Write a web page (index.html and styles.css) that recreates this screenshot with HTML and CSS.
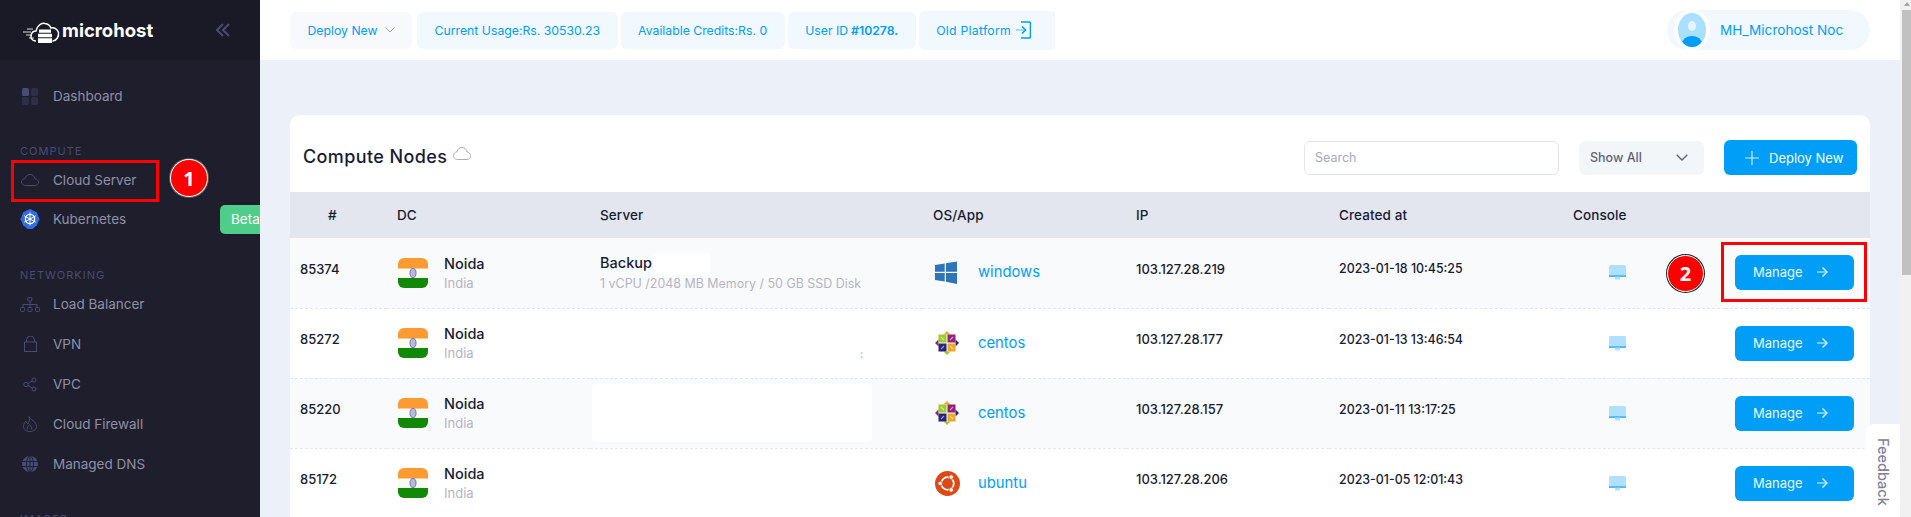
FILE: index.html
```html
<!DOCTYPE html>
<html lang="en">
<head>
<meta charset="utf-8">
<title>Compute Nodes</title>
<link rel="stylesheet" href="styles.css">
</head>
<body>
<svg class="defs" width="0" height="0" aria-hidden="true">
  <symbol id="flag" viewBox="0 0 30 30">
    <rect width="30" height="30" rx="6" fill="#f8fbf2"/>
    <path d="M0 10.500V6a6 6 0 0 1 6-6h18a6 6 0 0 1 6 6v4.500z" fill="#fe9a32"/>
    <path d="M0 20h30v4a6 6 0 0 1-6 6H6a6 6 0 0 1-6-6z" fill="#128807"/>
    <ellipse cx="15" cy="15" rx="3" ry="4.500" fill="#b9b9dc" stroke="#6d6db0" stroke-width=".9"/>
  </symbol>
  <symbol id="centos" viewBox="0 0 24 24">
    <path d="M12 0l3.500 3.500h-7z" fill="#efa724"/>
    <path d="M24 12l-3.500 3.500v-7z" fill="#262577"/>
    <path d="M12 24l-3.500-3.500h7z" fill="#9ccd2a"/>
    <path d="M0 12l3.500-3.500v7z" fill="#932279"/>
    <rect x="3.500" y="3.500" width="8" height="8" fill="#9ccd2a"/>
    <rect x="12.500" y="3.500" width="8" height="8" fill="#932279"/>
    <rect x="12.500" y="12.500" width="8" height="8" fill="#efa724"/>
    <rect x="3.500" y="12.500" width="8" height="8" fill="#262577"/>
    <path d="M6 6l3 3M18 6l-3 3M18 18l-3-3M6 18l3-3" stroke="#fff" stroke-opacity=".55" stroke-width="1.200"/>
  </symbol>
  <symbol id="ubuntu" viewBox="0 0 25 25">
    <circle cx="12.500" cy="12.500" r="12.500" fill="#dd4814"/>
    <circle cx="12.500" cy="12.500" r="6.300" fill="none" stroke="#fff" stroke-width="1.800"/>
    <g fill="#fff" stroke="#dd4814" stroke-width=".9">
      <circle cx="5.200" cy="12.500" r="2.300"/>
      <circle cx="16.200" cy="6.100" r="2.300"/>
      <circle cx="16.200" cy="18.900" r="2.300"/>
    </g>
  </symbol>
  <symbol id="windows" viewBox="0 0 22 23">
    <path d="M0 4l9.700-1.600v8.300H0zM10.900 2.200L22 .5v10.200H10.900zM0 12h9.700v8.500L0 19zM10.900 12H22v11l-11.100-2.300z" fill="#2f74b9"/>
  </symbol>
  <symbol id="monitor" viewBox="0 0 17 15">
    <path d="M0 1.500A1.500 1.500 0 0 1 1.500 0h14A1.500 1.500 0 0 1 17 1.500V11H0z" fill="#afe0ff"/>
    <rect y="10.500" width="17" height="1.200" fill="#009ef7"/>
    <rect x="6" y="11.700" width="5" height="2.800" fill="#afe0ff"/>
  </symbol>
  <symbol id="arrow" viewBox="0 0 12 12">
    <path d="M1 6h9.500" stroke="#9bd8fd" stroke-width="1.500" fill="none"/>
    <path d="M6.500 1.500L11 6l-4.500 4.500" stroke="#d4eeff" stroke-width="1.500" fill="none"/>
  </symbol>
</svg>

<div class="app">
  <aside class="sidebar">
    <div class="brand">
      <svg class="logo-mark" width="40" height="28" viewBox="0 0 40 28" aria-hidden="true">
        <path d="M1 15h8M4 18h6M7 21h5M5 12h6" stroke="#d8d8d8" stroke-width="1" fill="none"/>
        <path d="M14 24c-3.500 0-5.500-2.500-5-5.500.5-3 3-4.500 5-4.500 1-5 5-8.500 9-7.500 3 .3 5 2 6 4.500 3-1 6.500 1 7.500 4.500.6 4-2 8.500-6 8.500" stroke="#fff" stroke-width="1.500" fill="none"/>
        <path d="M17 12.500h12v3.300H17zM16 16.800h14v3.400H16zM16 21.200h14v4.800H16z" fill="#fff"/>
      </svg>
      <span class="logo-text">microhost</span>
      <svg class="collapse" width="14" height="14" viewBox="0 0 14 14" aria-hidden="true"><path d="M7 1L1 7l6 6M13 1L7 7l6 6" fill="none" stroke="#494b74" stroke-width="2"/></svg>
    </div>
    <nav class="nav">
      <a class="nav-item">
        <span class="nav-icon"><svg width="16" height="17" viewBox="0 0 16 17"><rect width="7" height="8" rx="1.500" fill="#494b74"/><rect x="9" width="7" height="8" rx="1.500" fill="#2d2e47"/><rect y="9" width="7" height="8" rx="1.500" fill="#2d2e47"/><rect x="9" y="9" width="7" height="8" rx="1.500" fill="#2d2e47"/></svg></span>
        Dashboard
      </a>
      <div class="nav-label">COMPUTE</div>
      <a class="nav-item">
        <span class="nav-icon"><svg width="18" height="12" viewBox="0 0 18 12"><path d="M4.500 11.500C2 11.500.5 10 .5 8c0-2 1.500-3.300 3.300-3.300C4.500 2.300 6.500.5 9 .5c2.800 0 4.700 2 5 4.300 1.800.2 3.500 1.400 3.500 3.300 0 2-1.500 3.400-3.700 3.400z" fill="none" stroke="#494b74"/></svg></span>
        Cloud Server
      </a>
      <a class="nav-item nav-item-tight">
        <span class="nav-icon"><svg width="20" height="20" viewBox="0 0 20 20"><path d="M10 0l6.800 3.200 2.700 7-2.700 6L12.500 20h-5l-4.300-3.800-2.700-6 2.700-7z" fill="#326ce5"/><circle cx="10" cy="10" r="4.600" fill="none" stroke="#fff" stroke-width="1.300"/><path d="M10 3.500v13M4.300 6.800l11.400 6.400M15.700 6.800L4.300 13.200" stroke="#fff" stroke-width="1"/></svg></span>
        Kubernetes
        <span class="beta">Beta</span>
      </a>
      <div class="nav-label">NETWORKING</div>
      <a class="nav-item">
        <span class="nav-icon"><svg width="20" height="15" viewBox="0 0 20 15" fill="none" stroke="#494b74"><rect x="7.800" y=".5" width="4" height="3.500" rx="1"/><path d="M10 4v3.500M3 10V7.500h14V10M10 7.500V10"/><rect x=".5" y="10.500" width="4" height="4" rx="1"/><rect x="8" y="10.500" width="4" height="4" rx="1"/><rect x="15.500" y="10.500" width="4" height="4" rx="1"/></svg></span>
        Load Balancer
      </a>
      <a class="nav-item">
        <span class="nav-icon"><svg width="13" height="16" viewBox="0 0 13 16" fill="none" stroke="#494b74"><rect x=".5" y="6" width="12" height="9.500"/><path d="M2.500 6V4a4 4 0 0 1 8 0v2"/></svg></span>
        VPN
      </a>
      <a class="nav-item">
        <span class="nav-icon"><svg width="14" height="15" viewBox="0 0 14 15" fill="none" stroke="#494b74"><circle cx="11" cy="3" r="2"/><circle cx="3" cy="7.500" r="2.200"/><circle cx="11" cy="12" r="2"/><path d="M5 6.500l4.300-2.500M5 8.500l4.300 2.500"/></svg></span>
        VPC
      </a>
      <a class="nav-item">
        <span class="nav-icon"><svg width="14" height="16" viewBox="0 0 14 16" fill="none" stroke="#494b74"><path d="M6 .5c1 3 7.500 5 7.500 10 0 3-3 5-6.500 5s-6.500-2-6.500-5C.5 8 2 6 3 5c0 1.500 1 2.500 2 3 1-2 2-4 1-7.500z"/><path d="M4.500 13.500c-1-2 1-3 2-5 1 1 3 3 2 5"/></svg></span>
        Cloud Firewall
      </a>
      <a class="nav-item">
        <span class="nav-icon"><svg width="16" height="16" viewBox="0 0 16 16"><circle cx="8" cy="8" r="8" fill="#494b74"/><g fill="none" stroke="#1e1e2d" stroke-width=".9"><ellipse cx="8" cy="8" rx="3.500" ry="8"/><path d="M0 5.500h16M0 10.500h16M8 0v16"/></g></svg></span>
        Managed DNS
      </a>
      <div class="nav-label">IMAGES</div>
    </nav>
  </aside>

  <div class="main">
    <header class="topbar">
      <div class="pills">
        <a class="pill pill-muted">Deploy New <svg class="pill-chev" width="10" height="6" viewBox="0 0 10 6"><path d="M.5.500L5 5 9.500.500" fill="none" stroke="#a1a5b7"/></svg></a>
        <a class="pill">Current Usage:Rs. 30530.23</a>
        <a class="pill">Available Credits:Rs. 0</a>
        <a class="pill">User ID <b>#10278.</b></a>
        <a class="pill pill-tall">Old Platform
          <svg width="15" height="18" viewBox="0 0 15 18" fill="none"><path d="M5 1h8a1.500 1.500 0 0 1 1.500 1.500v13A1.500 1.500 0 0 1 13 17H5" stroke="#009ef7" stroke-width="1.600"/><path d="M0 9h8" stroke="#9bd8fd" stroke-width="1.800"/><path d="M6 5.500L9.500 9 6 12.500" stroke="#009ef7" stroke-width="1.600"/></svg>
        </a>
      </div>
      <div class="user">
        <span class="avatar">
          <svg width="28" height="34" viewBox="0 0 28 34"><defs><clipPath id="av"><ellipse cx="14" cy="17" rx="14" ry="17"/></clipPath></defs><ellipse cx="14" cy="17" rx="14" ry="17" fill="#a9dfff"/><ellipse cx="14" cy="13" rx="4" ry="5" fill="#e6f6ff"/><g clip-path="url(#av)"><ellipse cx="14" cy="31" rx="10" ry="8" fill="#009ef7"/></g></svg>
        </span>
        <span>MH_Microhost Noc</span>
      </div>
    </header>

    <main class="content">
      <section class="card">
        <div class="card-head">
          <h1 class="title">Compute Nodes
            <svg width="18" height="13" viewBox="0 0 18 13"><path d="M4.500 12.500C2 12.500.5 11 .5 8.500c0-2 1.500-3.500 3.300-3.500C4.500 2.300 6.500.5 9 .5c2.800 0 4.700 2 5 4.500 1.800.2 3.500 1.500 3.500 3.500 0 2.500-1.500 4-3.700 4z" fill="none" stroke="#a9abc3"/></svg>
          </h1>
          <div class="tools">
            <input class="search" type="text" placeholder="Search">
            <div class="select">Show All <svg width="12" height="7" viewBox="0 0 12 7"><path d="M.7.700L6 6 11.300.700" fill="none" stroke="#5e6278" stroke-width="1.300"/></svg></div>
            <a class="deploy"><svg width="14" height="14" viewBox="0 0 14 14"><path d="M7 0v14M0 7h14" stroke="#cdebff" stroke-width="1.200"/></svg>Deploy New</a>
          </div>
        </div>
        <table class="nodes">
          <colgroup>
            <col class="c1"><col class="c2"><col class="c3"><col class="c4"><col class="c5"><col class="c6"><col class="c7"><col class="c8">
          </colgroup>
          <thead>
            <tr><th class="th-id">#</th><th>DC</th><th>Server</th><th>OS/App</th><th>IP</th><th>Created at</th><th>Console</th><th></th></tr>
          </thead>
          <tbody>
            <tr>
              <td class="up">85374</td>
              <td><div class="dc"><svg class="flag"><use href="#flag"/></svg><div><div class="strong">Noida</div><div class="sub">India</div></div></div></td>
              <td><div class="strong">Backup<span class="mask-name"></span></div><div class="sub spec">1 vCPU /2048 MB Memory / 50 GB SSD Disk</div></td>
              <td><div class="os"><span class="os-icon"><svg width="22" height="23"><use href="#windows"/></svg></span><a>windows</a></div></td>
              <td class="up">103.127.28.219</td>
              <td class="up date">2023-01-18 10:45:25</td>
              <td class="console"><svg width="17" height="15"><use href="#monitor"/></svg></td>
              <td><a class="manage">Manage<svg width="12" height="12"><use href="#arrow"/></svg></a></td>
            </tr>
            <tr>
              <td class="up">85272</td>
              <td><div class="dc"><svg class="flag"><use href="#flag"/></svg><div><div class="strong">Noida</div><div class="sub">India</div></div></div></td>
              <td class="stray-cell"><span class="stray">:</span></td>
              <td><div class="os"><span class="os-icon"><svg width="24" height="24"><use href="#centos"/></svg></span><a>centos</a></div></td>
              <td class="up">103.127.28.177</td>
              <td class="up date">2023-01-13 13:46:54</td>
              <td class="console"><svg width="17" height="15"><use href="#monitor"/></svg></td>
              <td><a class="manage">Manage<svg width="12" height="12"><use href="#arrow"/></svg></a></td>
            </tr>
            <tr>
              <td class="up">85220</td>
              <td><div class="dc"><svg class="flag"><use href="#flag"/></svg><div><div class="strong">Noida</div><div class="sub">India</div></div></div></td>
              <td class="mask-cell"><div class="mask-block"></div></td>
              <td><div class="os"><span class="os-icon"><svg width="24" height="24"><use href="#centos"/></svg></span><a>centos</a></div></td>
              <td class="up">103.127.28.157</td>
              <td class="up date">2023-01-11 13:17:25</td>
              <td class="console"><svg width="17" height="15"><use href="#monitor"/></svg></td>
              <td><a class="manage">Manage<svg width="12" height="12"><use href="#arrow"/></svg></a></td>
            </tr>
            <tr>
              <td class="up">85172</td>
              <td><div class="dc"><svg class="flag"><use href="#flag"/></svg><div><div class="strong">Noida</div><div class="sub">India</div></div></div></td>
              <td></td>
              <td><div class="os"><span class="os-icon"><svg width="25" height="25"><use href="#ubuntu"/></svg></span><a>ubuntu</a></div></td>
              <td class="up">103.127.28.206</td>
              <td class="up date">2023-01-05 12:01:43</td>
              <td class="console"><svg width="17" height="15"><use href="#monitor"/></svg></td>
              <td><a class="manage">Manage<svg width="12" height="12"><use href="#arrow"/></svg></a></td>
            </tr>
          </tbody>
        </table>
      </section>
    </main>
  </div>

  <div class="scrollbar">
    <span class="scroll-arrow"></span>
    <span class="scroll-thumb"></span>
  </div>

  <div class="feedback">Feedback</div>
  <div class="mark mark-box-1"></div>
  <div class="mark mark-box-2"></div>
  <div class="mark step step-1">1</div>
  <div class="mark step step-2">2</div>
</div>
</body>
</html>
```

FILE: styles.css
```css
* { box-sizing: border-box; }
html, body { margin: 0; height: 100%; overflow: hidden; }
body { font-family: Inter, "Noto Sans", "Liberation Sans", sans-serif; color: #181c32; background: #ecf0f8; }
a { text-decoration: none; }
.defs { position: absolute; }

.app { position: relative; display: flex; width: 1911px; height: 517px; overflow: hidden; }

/* sidebar */
.sidebar { flex: 0 0 260px; background: #1e1e2d; overflow: hidden; }
.brand { display: flex; align-items: center; height: 60px; padding-left: 22px; background: #1a1a27; }
.logo-mark { flex: none; margin-top: 2px; }
.logo-text { font-size: 18.500px; font-weight: 700; color: #fff; }
.collapse { margin-left: auto; margin-right: 30px; }
.nav { padding-top: 16px; }
.nav-item { display: flex; align-items: center; height: 40px; padding-left: 20px; font-size: 13.500px; color: #8f90a6; white-space: nowrap; }
.nav-item-tight { margin-top: -1px; }
.nav-icon { display: flex; align-items: center; justify-content: center; flex: 0 0 20px; margin-right: 13px; }
.nav-label { height: 18px; margin-top: 26px; padding-left: 20px; font-size: 11px; line-height: 18px; letter-spacing: 1px; color: #494b74; }
.nav-item-tight + .nav-label { margin-top: 27px; }
.beta { flex: none; margin-left: auto; margin-right: -10px; width: 50px; height: 29px; padding-left: 11px; line-height: 29px; border-radius: 5px; background: #50cd89; color: #fff; font-size: 13.500px; }

/* top bar */
.main { flex: 0 0 1640px; min-width: 0; }
.topbar { display: flex; align-items: center; justify-content: space-between; height: 60px; padding: 0 30px; background: #fff; }
.pills { display: flex; align-items: center; gap: 3px; }
.pill { display: flex; align-items: center; gap: 5px; height: 37px; padding: 0 17.500px; border-radius: 6px; background: #f1f9ff; color: #009ef7; font-size: 12.250px; white-space: nowrap; }
.pill b { font-weight: 600; margin-left: -2px; }
.pill-muted { background: #f8f9fc; margin-right: 2px; gap: 7px; }
.pill-tall { height: 39px; padding-right: 24px; border-radius: 6px 0 0 6px; letter-spacing: .25px; }
.user { display: flex; align-items: center; gap: 10px; width: 203px; height: 40px; padding-left: 7px; border-radius: 20px; background: #f1f9ff; color: #009ef7; font-size: 13.600px; white-space: nowrap; }
.avatar { display: flex; align-items: center; justify-content: center; flex: none; width: 36px; height: 40px; border-radius: 50%; background: #fff; }

/* card */
.content { padding: 55px 30px 0; }
.card { background: #fff; border-radius: 10px 10px 0 0; }
.card-head { display: flex; align-items: center; justify-content: space-between; height: 77px; padding: 8px 13px 0; }
.title { display: flex; align-items: center; gap: 6px; margin: 0; padding-bottom: 2px; font-size: 18px; font-weight: 500; letter-spacing: .4px; }
.title svg { margin-top: -6px; }
.tools { display: flex; align-items: center; gap: 20px; }
.search { width: 255px; height: 34px; padding: 0 10px; border: 1px solid #e4e6ef; border-radius: 6px; background: #fff; font: 12.500px Inter, sans-serif; outline: 0; }
.search::placeholder { color: #a8a9bc; }
.select { display: flex; align-items: center; justify-content: space-between; width: 125px; height: 34px; padding: 0 16px 0 11px; border-radius: 6px; background: #f3f6f9; color: #5e6278; font-size: 12.500px; font-weight: 500; }
.deploy { display: flex; align-items: center; gap: 10px; width: 133px; height: 35px; padding-left: 21px; border-radius: 6px; background: #009ef7; color: #fff; font-size: 13px; white-space: nowrap; }

/* table */
.nodes { width: 1580px; border-collapse: collapse; table-layout: fixed; font-size: 13px; }
.c1 { width: 97px; } .c2 { width: 203px; } .c3 { width: 333px; } .c4 { width: 203px; }
.c5 { width: 203px; } .c6 { width: 234px; } .c7 { width: 162px; } .c8 { width: 145px; }
.nodes th { height: 46px; padding: 0 0 0 10px; background: #e3e6ef; font-size: 13.500px; font-weight: 500; letter-spacing: .1px; text-align: left; color: #181c32; }
.nodes th.th-id { padding-left: 38px; }
.nodes td { height: 70px; padding: 0 0 0 10px; border-bottom: 1px dashed #e4e6ef; font-size: 13px; font-weight: 500; white-space: nowrap; }
.nodes tbody tr:nth-child(odd) td { background: #f9fafc; }
.nodes td.up { padding-bottom: 8px; }
.nodes td.date { font-size: 12.400px; }
.dc { display: flex; align-items: center; gap: 16px; }
.flag { flex: none; width: 30px; height: 30px; margin-left: 1px; }
.strong { font-size: 14.500px; font-weight: 500; line-height: 20px; }
.sub { font-size: 13px; font-weight: 400; line-height: 18px; color: #b5b5c3; }
.spec { font-size: 12.450px; }
.mask-name { display: inline-block; width: 56px; height: 22px; margin-left: 2px; border-radius: 3px; background: #fff; vertical-align: middle; }
.nodes td.mask-cell { padding-left: 2px; }
.mask-block { width: 280px; height: 58px; border-radius: 3px; background: #fff; }
.stray { display: block; margin-left: 260px; padding-top: 22px; font-size: 11px; font-weight: 400; color: #7fb6e2; }
.os { display: flex; align-items: center; }
.os-icon { display: flex; align-items: center; flex: 0 0 45px; padding-left: 2px; }
.os a { padding-bottom: 1px; color: #009ef7; font-size: 14.800px; font-weight: 400; }
.console svg { display: block; margin-left: 36px; }
.manage { display: flex; align-items: center; gap: 13px; width: 119px; height: 35px; padding: 0 0 1px 18px; border-radius: 6px; background: #009ef7; color: #e8f6ff; font-size: 13px; font-weight: 400; }

/* scrollbar */
.scrollbar { position: relative; flex: 0 0 11px; background: #f1f1f1; }
.scroll-arrow { position: absolute; top: 2px; left: 4px; border: 3px solid transparent; border-top: 0; border-bottom: 4px solid #a3a3a3; }
.scroll-thumb { position: absolute; top: 10px; left: 2px; width: 9px; height: 265px; background: #c1c1c1; }

/* overlays */
.feedback { position: absolute; left: 1866px; top: 424px; width: 34px; height: 93px; padding-top: 14px; border-radius: 8px 0 0 0; background: #fff; color: #7e8299; font-size: 14.500px; font-weight: 500; line-height: 34px; writing-mode: vertical-rl; }
.mark-box-1 { position: absolute; left: 11px; top: 160px; width: 148px; height: 42px; border: 3px solid #f00; }
.mark-box-2 { position: absolute; left: 1721px; top: 242px; width: 146px; height: 60px; border: 3px solid #f00; }
.step { position: absolute; display: flex; align-items: center; justify-content: center; border-radius: 50%; background: #f00; color: #fff; font-family: "Open Sans", sans-serif; font-size: 20px; font-weight: 700; }
.step-1 { left: 171px; top: 160px; width: 36px; height: 36px; box-shadow: 0 0 0 1px #fff, 0 0 0 2px #555; }
.step-2 { left: 1667px; top: 255px; width: 37px; height: 37px; border: 1px solid #fff; box-shadow: 0 0 0 1px #222; }
```
